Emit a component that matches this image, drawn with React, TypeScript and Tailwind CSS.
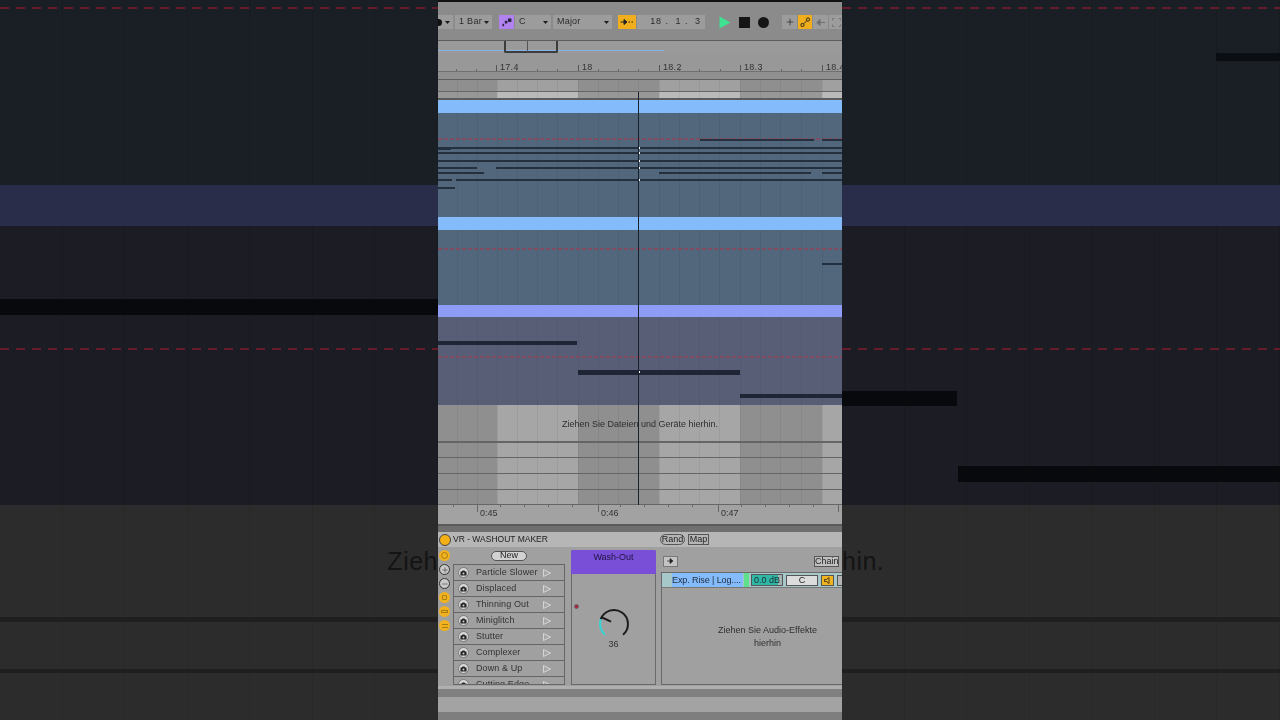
import { Plus, Minus } from "lucide-react"

const font = "font-['Liberation_Sans',Arial,sans-serif]"

const cellWidths = "grid-cols-[19px_20px_20px_20px_20px_20px_21px_20px_20px_20px_21px_20px_20px_20px_21px_20px_20px_21px_21px_20px]"
const cells = [1, 1, 1, 0, 0, 0, 0, 1, 1, 1, 1, 0, 0, 0, 0, 1, 1, 1, 1, 0]

// arrangement background, dark/light every bar
function Lanes({ dark, light, line, className }: { dark: string; light: string; line: string; className: string }) {
  return (
    <div className={`grid ${cellWidths} ${className}`}>
      {cells.map((d, i) => (
        <div key={i} className={`${d ? dark : light} ${i > 0 ? "border-l" : ""} ${line}`} />
      ))}
    </div>
  )
}

function Red({ top, dash = "4 2", color = "#8e4458", width = "1.600" }: { top: string; dash?: string; color?: string; width?: string }) {
  return (
    <svg className={`absolute left-0 w-full h-[2px] ${top}`}>
      <line x1="0" y1="1" x2="100%" y2="1" stroke={color} strokeWidth={width} strokeDasharray={dash} />
    </svg>
  )
}

function Note({ cls }: { cls: string }) {
  return <div className={`absolute ${cls}`} />
}

function Tick({ cls }: { cls: string }) {
  return <div className={`absolute w-[2px] h-[2px] left-[200px] bg-white ${cls}`} />
}

function Caret() {
  return (
    <svg width="5" height="3" viewBox="0 0 5 3" className="shrink-0">
      <path d="M0 0H5L2.500 3Z" fill="#1c1c1c" />
    </svg>
  )
}

function Box({ cls, children }: { cls: string; children?: React.ReactNode }) {
  return <div className={`h-[14px] flex items-center bg-[#9c9c9c] text-[9px] text-[#2b2b2b] shrink-0 ${cls}`}>{children}</div>
}

function Toolbar() {
  return (
    <div className="h-[34px] bg-[#8b8b8b] flex items-center gap-[2px] pt-[6px] overflow-hidden">
      <Box cls="w-[15px] pr-[3px] justify-between">
        <div className="w-[4px] h-[7px] rounded-r-full bg-[#111]" />
        <Caret />
      </Box>
      <Box cls="w-[37px] pl-[4px] pr-[3px] justify-between tracking-[0.3px]">
        1 Bar
        <Caret />
      </Box>
      <div className="w-[15px] h-[14px] ml-[5px] -mr-[1px] bg-[#b083ef] flex items-center justify-center shrink-0">
        <svg width="10" height="9" viewBox="0 0 10 9">
          <rect x="6" y="0.500" width="3.400" height="3.400" fill="#2a2140" />
          <rect x="2.800" y="2.800" width="2.600" height="2.600" fill="#2a2140" />
          <rect x="0.500" y="5.800" width="1.600" height="2.400" fill="#2a2140" />
        </svg>
      </div>
      <Box cls="w-[36px] pl-[4px] pr-[3px] justify-between">
        C
        <Caret />
      </Box>
      <Box cls="w-[59px] pl-[4px] pr-[3px] justify-between tracking-[0.2px]">
        Major
        <Caret />
      </Box>
      <div className="w-[18px] h-[14px] ml-[4px] -mr-[1px] bg-[#f0ad1c] flex items-center justify-center shrink-0">
        <svg width="14" height="8" viewBox="0 0 14 8">
          <path d="M0.500 4H6M4 1.500 7 4 4 6.500Z" stroke="#222" fill="#222" strokeWidth="1" />
          <path d="M8.500 4h1.500M11.500 4h1.500" stroke="#222" strokeWidth="1" />
        </svg>
      </div>
      <Box cls="w-[68px] justify-end pr-[4px] text-[9px] tracking-[0.9px]">
        <span className="whitespace-pre">18 .  1 .  3</span>
      </Box>
      <svg width="12" height="13" viewBox="0 0 12 13" className="ml-[12px] shrink-0">
        <path d="M0.500 0.500 11.500 6.500 0.500 12.500Z" fill="#3fe08f" />
      </svg>
      <div className="w-[11px] h-[11px] ml-[6px] bg-[#151515] shrink-0" />
      <div className="w-[11px] h-[11px] ml-[6px] rounded-full bg-[#151515] shrink-0" />
      <Box cls="w-[15px] ml-[11px] justify-center -mr-[1px]">
        <Plus size={10} strokeWidth={1.6} className="text-[#222]" />
      </Box>
      <div className="w-[14px] h-[14px] bg-[#f0ad1c] flex items-center justify-center shrink-0">
        <svg width="11" height="11" viewBox="0 0 11 11" fill="none" stroke="#222" strokeWidth="1">
          <rect x="1" y="6.500" width="3" height="3" rx="1.200" />
          <rect x="6.500" y="1" width="3" height="3" rx="1.200" />
          <path d="M4 6.500 6.500 4" />
        </svg>
      </div>
      <Box cls="w-[15px] justify-center -ml-[1px]">
        <svg width="9" height="7" viewBox="0 0 9 7">
          <path d="M9 3.500H3M4 0.500 0.800 3.500 4 6.500Z" stroke="#6f6f6f" fill="#6f6f6f" />
        </svg>
      </Box>
      <Box cls="w-[14px] justify-center -ml-[1px]">
        <svg width="9" height="9" viewBox="0 0 9 9" fill="none" stroke="#777" strokeWidth="1">
          <path d="M0.500 2.500v-2h2M6.500 0.500h2v2M8.500 6.500v2h-2M2.500 8.500h-2v-2" />
        </svg>
      </Box>
    </div>
  )
}

function Overview() {
  return (
    <div className="relative h-[13px] mt-[4px] bg-[#9a9a9a] border-t border-[#5c5c5c]">
      <div className="absolute left-0 top-[9px] w-[226px] h-px bg-[#86b4e6]" />
      <div className="absolute left-[66px] top-0 w-[54px] h-[12px] border-2 border-t-0 border-[#3c3c3c] rounded-b-[2px]" />
      <div className="absolute left-[89px] top-0 w-px h-[11px] bg-[#555]" />
    </div>
  )
}

function BarRuler() {
  const labels = [
    ["left-[58px]", "17.4"],
    ["left-[140px]", "18"],
    ["left-[221px]", "18.2"],
    ["left-[302px]", "18.3"],
    ["left-[384px]", "18.4"],
  ]
  const minor = [18, 38, 78, 99, 119, 160, 180, 200, 241, 261, 282, 322, 343, 363]
  return (
    <div className="relative h-[19px] bg-[#989898] border-b-[1.500px] border-[#707070]">
      {minor.map((x) => (
        <div key={x} className="absolute bottom-0 w-px h-[2px] bg-[#666]" style={{ left: x }} />
      ))}
      {labels.map(([l, t]) => (
        <div key={t} className={`absolute bottom-0 ${l} h-[6px] pl-[3px] border-l border-[#555] text-[9px] leading-[6px] text-[#333] tracking-[0.3px]`}>
          <span className="relative -top-[1px]">{t}</span>
        </div>
      ))}
    </div>
  )
}

function ClipHeader({ cls }: { cls: string }) {
  return <div className={`shrink-0 ${cls}`} />
}

function Arrangement() {
  const n = "h-[2px] bg-[#24303e]"
  const gray = "border-black/5"
  return (
    <div className="relative">
      <div className="h-[8px] bg-[#909090] border-b border-[#5f5f5f]" />
      <Lanes dark="bg-[#8f8f8f]" light="bg-[#a0a0a0]" line={gray} className="h-[12px] border-b border-[#666]" />
      <Lanes dark="bg-[#989898]" light="bg-[#bababa]" line={gray} className="h-[8px] border-b-2 border-[#5b5b5b]" />

      {/* first clip */}
      <ClipHeader cls="h-[13px] bg-[#84bcfb]" />
      <div className="relative h-[104px]">
        <Lanes dark="bg-[#52677c]" light="bg-[#52677c]" line={gray} className="h-full" />
        <Red top="top-[25px]" />
        <Note cls={`left-[262px] top-[26px] w-[114px] ${n}`} />
        <Note cls={`left-[384px] top-[26px] w-[20px] ${n}`} />
        <Note cls={`left-0 top-[34px] w-full ${n}`} />
        <Note cls={`left-0 top-[35px] w-[13px] ${n}`} />
        <Note cls={`left-0 top-[39px] w-full ${n}`} />
        <Note cls={`left-0 top-[47px] w-full ${n}`} />
        <Note cls={`left-0 top-[54px] w-[39px] ${n}`} />
        <Note cls={`left-[58px] top-[54px] w-[346px] ${n}`} />
        <Note cls={`left-0 top-[59px] w-[46px] ${n}`} />
        <Note cls={`left-[221px] top-[59px] w-[152px] ${n}`} />
        <Note cls={`left-[384px] top-[59px] w-[20px] ${n}`} />
        <Note cls={`left-0 top-[66px] w-[14px] ${n}`} />
        <Note cls={`left-[18px] top-[66px] w-[386px] ${n}`} />
        <Note cls={`left-0 top-[74px] w-[17px] ${n}`} />
        <Tick cls="top-[34px]" />
        <Tick cls="top-[39px]" />
        <Tick cls="top-[47px]" />
        <Tick cls="top-[54px]" />
        <Tick cls="top-[66px]" />
      </div>

      {/* second clip */}
      <ClipHeader cls="h-[13px] bg-[#84bcfb]" />
      <div className="relative h-[75px]">
        <Lanes dark="bg-[#52677c]" light="bg-[#52677c]" line={gray} className="h-full" />
        <Red top="top-[18px]" />
        <Note cls="left-[384px] top-[33px] w-[20px] h-[2px] bg-[#23303f]" />
      </div>

      {/* third clip */}
      <ClipHeader cls="h-[12px] bg-[#8f9cf5]" />
      <div className="relative h-[88px]">
        <Lanes dark="bg-[#585e76]" light="bg-[#585e76]" line={gray} className="h-full" />
        <Red top="top-[39px]" />
        <Note cls="left-0 top-[24px] w-[139px] h-[4px] bg-[#202536]" />
        <Note cls="left-[140px] top-[53px] w-[162px] h-[5px] bg-[#202536]" />
        <Note cls="left-[302px] top-[77px] w-[102px] h-[4px] bg-[#202536]" />
        <Tick cls="top-[54px]" />
      </div>

      {/* drop area */}
      <div className="relative h-[38px]">
        <Lanes dark="bg-[#8f8f8f]" light="bg-[#a6a6a6]" line={gray} className="h-full border-b-2 border-[#656565]" />
        <div className="absolute inset-0 pt-[2px] flex items-center justify-center text-[9px] text-[#2e2e2e]">
          Ziehen Sie Dateien und Geräte hierhin.
        </div>
      </div>
      <Lanes dark="bg-[#8f8f8f]" light="bg-[#a6a6a6]" line={gray} className="h-[15px] border-b border-[#666]" />
      <Lanes dark="bg-[#8f8f8f]" light="bg-[#a6a6a6]" line={gray} className="h-[16px] border-b border-[#666]" />
      <Lanes dark="bg-[#8f8f8f]" light="bg-[#a6a6a6]" line={gray} className="h-[16px] border-b border-[#666]" />
      <Lanes dark="bg-[#8f8f8f]" light="bg-[#a6a6a6]" line={gray} className="h-[15px] border-b border-[#666]" />

      {/* playhead */}
      <div className="absolute left-[200px] top-[20px] bottom-0 w-px bg-[#18222c]" />
    </div>
  )
}

function TimeRuler() {
  const labels = [
    ["left-[39px]", "0:45"],
    ["left-[160px]", "0:46"],
    ["left-[280px]", "0:47"],
  ]
  const minor = [15, 62, 86, 110, 134, 182, 206, 230, 254, 303, 327, 351, 375]
  return (
    <div className="relative h-[21px] bg-[#a2a2a2] border-b-2 border-[#5a5a5a]">
      {minor.map((x) => (
        <div key={x} className="absolute top-0 w-px h-[2px] bg-[#666]" style={{ left: x }} />
      ))}
      {labels.map(([l, t]) => (
        <div key={t} className={`absolute top-0 ${l} h-[7px] pl-[2px] border-l border-[#666] text-[9px] leading-[16px] text-[#333]`}>
          {t}
        </div>
      ))}
      <div className="absolute top-0 left-[400px] h-[7px] border-l border-[#666]" />
    </div>
  )
}

function OrangeDot({ children }: { children?: React.ReactNode }) {
  return <div className="w-[11px] h-[11px] rounded-full bg-[#f0b21e] flex items-center justify-center">{children}</div>
}

function SideStrip() {
  return (
    <div className="w-[15px] pl-[1px] flex flex-col items-start gap-[3px] shrink-0">
      <OrangeDot>
        <div className="w-[7px] h-[7px] rounded-full border border-[#a87c12]" />
      </OrangeDot>
      <div className="w-[11px] h-[11px] rounded-full bg-[#c9c9c9] border border-[#333] flex items-center justify-center">
        <Plus size={8} strokeWidth={1.5} className="text-[#222]" />
      </div>
      <div className="w-[11px] h-[11px] rounded-full bg-[#c9c9c9] border border-[#333] flex items-center justify-center">
        <Minus size={8} strokeWidth={1.5} className="text-[#222]" />
      </div>
      <OrangeDot>
        <div className="w-[5px] h-[5px] rounded-[1px] border border-[#a87c12]" />
      </OrangeDot>
      <OrangeDot>
        <div className="w-[7px] h-[3px] border border-[#a87c12]" />
      </OrangeDot>
      <OrangeDot>
        <div className="w-[6px] h-[4px] border-y border-[#a87c12]" />
      </OrangeDot>
    </div>
  )
}

function PresetRow({ name }: { name: string }) {
  return (
    <div className="h-[16px] shrink-0 flex items-center border-b border-[#666] pl-[4px] pr-[12px]">
      <div className="w-[11px] h-[11px] rounded-full bg-[#d9d9d9] border border-[#777] flex items-center justify-center shrink-0">
        <svg width="7" height="6" viewBox="0 0 7 6">
          <path d="M0.500 1.500H2L2.500 0.500H4.500L5 1.500H6.500V5.500H0.500Z" fill="#222" />
          <circle cx="3.500" cy="3.400" r="1" fill="#d9d9d9" />
        </svg>
      </div>
      <span className="ml-[7px] flex-1 text-[9px] text-[#333] tracking-[0.1px] whitespace-nowrap">{name}</span>
      <svg width="10" height="10" viewBox="0 0 10 10" className="shrink-0">
        <path d="M1.500 1.500 8.500 5 1.500 8.500Z" fill="#a6a6a6" stroke="#dadada" strokeWidth="0.900" />
      </svg>
    </div>
  )
}

function Presets() {
  const names = ["Particle Slower", "Displaced", "Thinning Out", "Miniglitch", "Stutter", "Complexer", "Down & Up", "Cutting Edge"]
  return (
    <div className="w-[112px] shrink-0 flex flex-col items-center">
      <div className="w-[36px] h-[10px] mt-[1px] rounded-full bg-[#d2d2d2] border border-[#555] flex items-center justify-center text-[9px] text-[#222]">
        New
      </div>
      <div className="w-full h-[121px] mt-[3px] border border-[#666] overflow-hidden flex flex-col">
        {names.map((n) => (
          <PresetRow key={n} name={n} />
        ))}
      </div>
    </div>
  )
}

function WashOut() {
  return (
    <div className="w-[85px] h-[135px] ml-[6px] shrink-0 border border-[#6a6a6a] border-t-0 rounded-t-[2px] relative">
      <div className="h-[24px] bg-[#7a4fd8] rounded-t-[2px] -mx-px text-center text-[9px] leading-[15px] text-[#1f1640]">Wash-Out</div>
      <div className="absolute left-[2px] top-[54px] w-[5px] h-[5px] rounded-full bg-[#b3253f] border border-[#666]" />
      <div className="flex flex-col items-center mt-[34px]">
        <svg width="32" height="32" viewBox="0 0 32 32" fill="none" strokeWidth="2">
          <path d="M7 26.700A14 14 0 0 1 2.800 11.200" stroke="#37d6d6" />
          <path d="M2.800 11.200A14 14 0 1 1 25 26.700" stroke="#1c1c1c" />
          <path d="M3 9 13 13.700" stroke="#1c1c1c" />
        </svg>
        <div className="text-[9px] leading-[10px] text-[#333] -mt-[1px]">36</div>
      </div>
    </div>
  )
}

function ChainPanel() {
  return (
    <div className="w-[212px] h-[135px] ml-[5px] shrink-0 flex flex-col">
      <div className="h-[22px] flex items-center justify-between pl-[2px] pr-[34px] shrink-0">
        <div className="w-[15px] h-[11px] bg-[#c4c4c4] border border-[#777] flex items-center justify-center">
          <svg width="8" height="6" viewBox="0 0 8 6">
            <path d="M0 3H3M3 0.500 6 3 3 5.500Z" stroke="#222" fill="#222" strokeWidth="0.700" />
          </svg>
        </div>
        <div className="w-[25px] h-[11px] bg-[#c0c0c0] border border-[#555] text-[9px] leading-[9px] text-center text-[#222]">Chain</div>
      </div>
      <div className="flex-1 flex flex-col border border-r-0 border-[#6a6a6a]">
        <div className="h-[15px] shrink-0 flex items-center bg-[#a7c8c8] border-b border-[#777]">
          <div className="w-[71px] h-full ml-[10px] bg-[#84bcfb] text-[9px] leading-[14px] text-[#1f2a3a] tracking-[-0.1px] whitespace-nowrap shrink-0">
            Exp. Rise | Log....
          </div>
          <div className="w-[5px] h-full ml-[1px] bg-[#5fe08a] shrink-0" />
          <div className="w-[32px] h-[12px] ml-[2px] bg-[linear-gradient(90deg,#2fb8a8_86%,#a3b5b2_86%)] border border-[#555] text-[9px] leading-[10px] text-center text-[#1c2c2c] shrink-0">0.0 dB</div>
          <div className="w-[32px] h-[11px] ml-[3px] bg-[#dcdcdc] border border-[#555] text-[9px] leading-[9px] text-center text-[#222] shrink-0">C</div>
          <div className="w-[13px] h-[11px] ml-[3px] bg-[#f0b21e] border border-[#555] flex items-center justify-center shrink-0">
            <svg width="7" height="7" viewBox="0 0 7 7">
              <path d="M0.500 2.500H2.500L5 0.500V6.500L2.500 4.500H0.500Z" fill="none" stroke="#222" strokeWidth="0.800" />
            </svg>
          </div>
          <div className="w-[13px] h-[11px] ml-[3px] bg-[#b5b5b5] border border-[#555] shrink-0" />
        </div>
        <div className="flex-1 flex items-center justify-center text-center text-[9px] leading-[13px] text-[#303030] pt-[1px]">
          <div>
            Ziehen Sie Audio-Effekte
            <br />
            hierhin
          </div>
        </div>
      </div>
    </div>
  )
}

function DeviceView() {
  return (
    <div className="h-[194px] bg-[#a0a0a0] overflow-hidden">
      <div className="h-[6px] bg-[#6f6f6f]" />
      <div className="h-[15px] bg-[#b6b6b6] flex items-center text-[8.500px] text-[#222]">
        <div className="w-[12px] h-[12px] ml-px rounded-full bg-[#f5b015] border border-[#444] shrink-0" />
        <span className="ml-[2px]">VR - WASHOUT MAKER</span>
        <div className="ml-[112px] w-[25px] h-[11px] rounded-full border border-[#555] text-[9px] leading-[9px] text-center">Rand</div>
        <div className="ml-[3px] w-[21px] h-[11px] border border-[#555] text-[9px] leading-[9px] text-center">Map</div>
      </div>
      <div className="h-[139px] flex pt-[3px]">
        <SideStrip />
        <Presets />
        <WashOut />
        <ChainPanel />
      </div>
      <div className="h-[3px] bg-[#b0b0b0]" />
      <div className="h-[8px] bg-[#808080]" />
      <div className="h-[15px] bg-[#a3a3a3]" />
      <div className="h-[8px] bg-[#7e7e7e]" />
    </div>
  )
}

// faint bar lines of the blown-up background
function SideGrid({ line }: { line: string }) {
  return (
    <div className="absolute inset-0 grid grid-cols-7">
      {[0, 1, 2, 3, 4, 5, 6].map((i) => (
        <div key={i} className={`border-r ${line}`} />
      ))}
    </div>
  )
}

function SideColumn({ side }: { side: "left" | "right" }) {
  const left = side === "left"
  return (
    <div className="flex-1 min-w-0 flex flex-col">
      <div className="relative h-[185px] bg-[#1a1f25]">
        <SideGrid line="border-[#181c21]" />
        <Red top="top-[7px]" dash="9 7" color="#641c2a" width="2" />
        {!left && <Note cls="left-[374px] top-[53px] w-[64px] h-[8px] bg-[#0a0d11]" />}
      </div>
      <div className="h-[41px] bg-[#292d4a]" />
      <div className="relative h-[279px] bg-[#1b1c24]">
        <SideGrid line="border-[#191a20]" />
        <Red top="top-[122px]" dash="9 7" color="#641c2a" width="2" />
        {left && <Note cls="left-0 top-[73px] w-full h-[16px] bg-[#07090d]" />}
        {!left && <Note cls="left-0 top-[165px] w-[115px] h-[15px] bg-[#07090d]" />}
        {!left && <Note cls="left-[116px] top-[240px] w-[322px] h-[16px] bg-[#07090d]" />}
      </div>
      <div className="relative h-[215px] bg-[#2c2c2c] flex flex-col">
        <SideGrid line="border-[#292929]" />
        <div className={`relative h-[112px] flex items-center overflow-hidden text-[25px] text-[#141414] tracking-[0.5px] pt-[2px] ${left ? "justify-end" : "justify-start"}`}>
          {left ? "Zieh" : "hin."}
        </div>
        <div className="relative h-[5px] bg-[#1f1f1f]" />
        <div className="h-[47px]" />
        <div className="relative h-[4px] bg-[#1f1f1f]" />
      </div>
    </div>
  )
}

export default function App() {
  return (
    <div className={`w-[1280px] h-[720px] flex overflow-hidden ${font}`}>
      <SideColumn side="left" />
      <main className="w-[404px] shrink-0 flex flex-col bg-[#8b8b8b] border-t-2 border-[#111] overflow-hidden blur-[0.3px]">
        <Toolbar />
        <Overview />
        <BarRuler />
        <Arrangement />
        <TimeRuler />
        <DeviceView />
      </main>
      <SideColumn side="right" />
    </div>
  )
}
